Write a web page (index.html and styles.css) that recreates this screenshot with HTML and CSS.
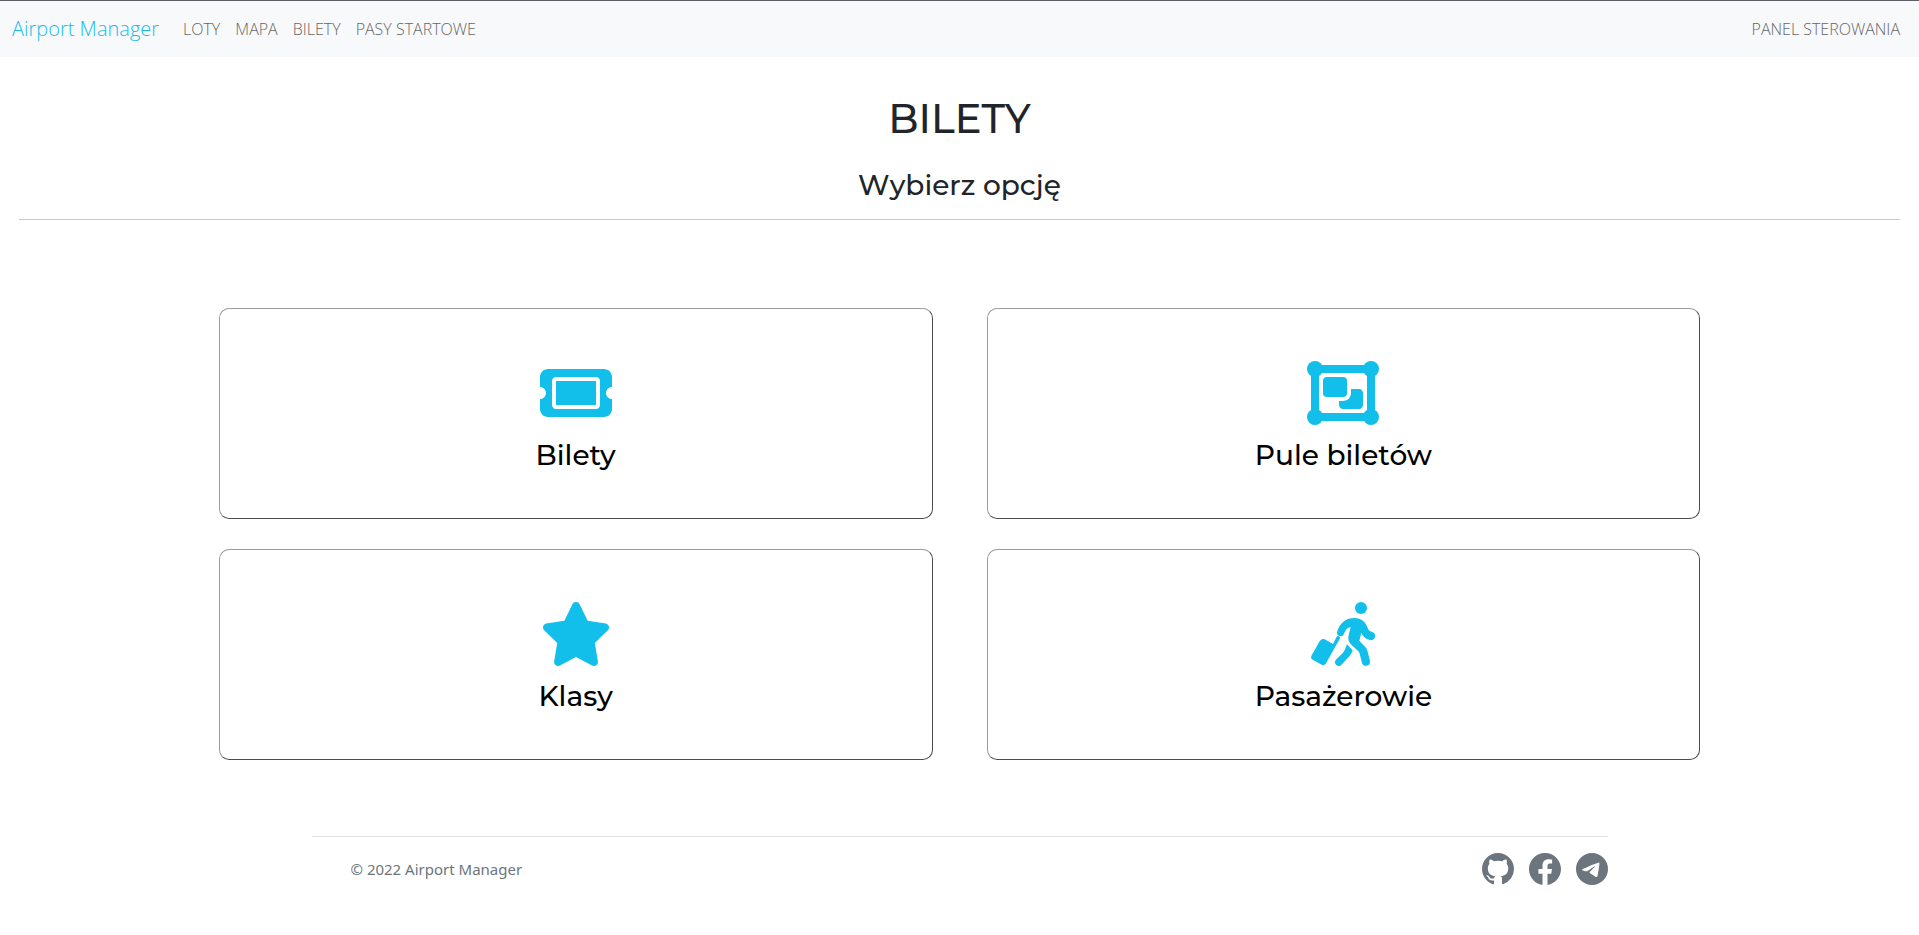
FILE: index.html
```html
<!DOCTYPE html>
<html lang="pl">
<head>
  <meta charset="utf-8">
  <meta name="viewport" content="width=device-width, initial-scale=1">
  <title>Airport Manager</title>
  <link rel="stylesheet" href="styles.css">
</head>
<body>
  <nav class="navbar">
    <a class="brand" href="#">Airport Manager</a>
    <div class="nav-links">
      <a href="#">LOTY</a>
      <a href="#">MAPA</a>
      <a href="#">BILETY</a>
      <a href="#">PASY STARTOWE</a>
    </div>
    <a class="panel-link" href="#">PANEL STEROWANIA</a>
  </nav>

  <header class="page-header">
    <h1>BILETY</h1>
    <h2>Wybierz opcję</h2>
  </header>

  <main class="options">
    <button class="option" type="button">
      <svg class="option-icon" viewBox="0 0 576 512" aria-hidden="true"><path d="M128 160H448V352H128V160zM512 64C547.3 64 576 92.65 576 128V208C549.5 208 528 229.5 528 256C528 282.5 549.5 304 576 304V384C576 419.3 547.3 448 512 448H64C28.65 448 0 419.3 0 384V304C26.51 304 48 282.5 48 256C48 229.5 26.51 208 0 208V128C0 92.65 28.65 64 64 64H512zM96 352C96 369.7 110.3 384 128 384H448C465.7 384 480 369.7 480 352V160C480 142.3 465.7 128 448 128H128C110.3 128 96 142.3 96 160V352z"/></svg>
      <span>Bilety</span>
    </button>
    <button class="option" type="button">
      <svg class="option-icon" viewBox="0 0 576 512" aria-hidden="true">
        <path fill-rule="evenodd" d="M64 32H512L544 64V448L512 480H64L32 448V64zM118 96L96 118V394L118 416H458L480 394V118L458 96z"/>
        <circle cx="64" cy="64" r="64"/><circle cx="512" cy="64" r="64"/><circle cx="64" cy="448" r="64"/><circle cx="512" cy="448" r="64"/>
        <rect x="128" y="128" width="192" height="160" rx="32"/>
        <path d="M288 320c35.300 0 64-28.700 64-64V224h64c17.700 0 32 14.300 32 32v96c0 17.700-14.300 32-32 32H288c-17.700 0-32-14.300-32-32V320z"/>
      </svg>
      <span>Pule biletów</span>
    </button>
    <button class="option" type="button">
      <svg class="option-icon" viewBox="0 0 576 512" aria-hidden="true"><path d="M381.2 150.3L524.9 171.5C536.8 173.2 546.8 181.6 550.6 193.1C554.4 204.7 551.3 217.3 542.7 225.9L438.5 328.1L463.1 474.7C465.1 486.7 460.2 498.9 450.2 506C440.3 513.1 427.2 514 416.5 508.3L288.1 439.8L159.8 508.3C149 514 135.9 513.1 126 506C116.1 498.9 111.1 486.7 113.2 474.7L137.8 328.1L33.58 225.9C24.97 217.3 21.91 204.7 25.69 193.1C29.46 181.6 39.43 173.2 51.42 171.5L195 150.3L259.4 17.97C264.7 6.995 275.8 0 288.1 0C300.4 0 311.5 6.995 316.9 17.97L381.2 150.3z"/></svg>
      <span>Klasy</span>
    </button>
    <button class="option" type="button">
      <svg class="option-icon" viewBox="246 63 192 192" aria-hidden="true">
        <circle cx="396" cy="81" r="18"/>
        <path d="M376 111C352 111 334 124 326 148C321 158 326 166 335 166C341 166 344 162 346 156C349 147 356 140 365 138L359 162C356 173 359 184 367 191L388 211C390 213 391 215 392 218L399 246C401 252 407 256 413 254C420 253 424 247 423 240L416 212C415 206 412 201 408 197L391 179L397 155L400 161C403 166 408 170 412 173L422 177C428 179 435 176 438 169C440 162 437 156 431 154L424 151C421 150 419 148 418 145L413 134C407 120 394 111 376 111Z"/>
        <path d="M354 190L371 208C369 214 366 220 362 224L339 250C334 256 326 256 321 251C316 246 317 240 322 235L342 215C345 211 347 208 348 205Z"/>
        <path d="M287 175L312 189L322 169C324 165 327 164 330 166C333 168 334 171 332 174L291 247C288 252 283 254 278 251L251 236C246 233 245 228 248 223L272 181C275 175 281 172 287 175Z"/>
      </svg>
      <span>Pasażerowie</span>
    </button>
  </main>

  <footer class="footer">
    <span class="copyright">© 2022 Airport Manager</span>
    <div class="social">
      <a href="#" aria-label="GitHub"><svg viewBox="0 0 16 16"><path d="M8 0C3.58 0 0 3.58 0 8c0 3.54 2.29 6.53 5.47 7.59.4.07.55-.17.55-.38 0-.19-.01-.82-.01-1.49-2.01.37-2.53-.49-2.69-.94-.09-.23-.48-.94-.82-1.13-.28-.15-.68-.52-.01-.53.63-.01 1.08.58 1.23.82.72 1.21 1.87.87 2.33.66.07-.52.28-.87.51-1.07-1.78-.2-3.64-.89-3.64-3.95 0-.87.31-1.59.82-2.15-.08-.2-.36-1.02.08-2.12 0 0 .67-.21 2.2.82.64-.18 1.32-.27 2-.27.68 0 1.36.09 2 .27 1.53-1.04 2.2-.82 2.2-.82.44 1.1.16 1.92.08 2.12.51.56.82 1.27.82 2.15 0 3.07-1.87 3.75-3.65 3.95.29.25.54.73.54 1.48 0 1.07-.01 1.93-.01 2.2 0 .21.15.46.55.38A8.012 8.012 0 0 0 16 8c0-4.42-3.58-8-8-8z"/></svg></a>
      <a href="#" aria-label="Facebook"><svg viewBox="0 0 16 16"><path d="M16 8.049c0-4.446-3.582-8.05-8-8.05C3.58 0-.002 3.603-.002 8.05c0 4.017 2.926 7.347 6.75 7.951v-5.625h-2.03V8.05H6.75V6.275c0-2.017 1.195-3.131 3.022-3.131.876 0 1.791.157 1.791.157v1.98h-1.009c-.993 0-1.303.621-1.303 1.258v1.51h2.218l-.354 2.326H9.25V16c3.824-.604 6.75-3.934 6.75-7.951z"/></svg></a>
      <a href="#" aria-label="Telegram"><svg viewBox="0 0 16 16"><path d="M16 8A8 8 0 1 1 0 8a8 8 0 0 1 16 0zM8.287 5.906c-.778.324-2.334.994-4.666 2.01-.378.15-.577.298-.595.442-.03.243.275.339.69.47l.175.055c.408.133.958.288 1.243.294.26.006.549-.1.868-.32 2.179-1.471 3.304-2.214 3.374-2.23.05-.012.12-.026.166.016.047.041.042.12.037.141-.03.129-1.227 1.241-1.846 1.817-.193.18-.33.307-.358.336a8.154 8.154 0 0 1-.188.186c-.38.366-.664.64.015 1.088.327.216.589.393.85.571.284.194.568.387.936.629.093.06.183.125.27.187.331.236.63.448.997.414.214-.02.435-.22.547-.82.265-1.417.786-4.486.906-5.751a1.426 1.426 0 0 0-.013-.315.337.337 0 0 0-.114-.217.526.526 0 0 0-.31-.093c-.3.005-.763.166-2.984 1.09z"/></svg></a>
    </div>
  </footer>
</body>
</html>
```
FILE: styles.css
```css
* {
  box-sizing: border-box;
}

body {
  margin: 0;
  background: #fff;
  color: #212529;
  font-family: "Segoe UI", "Open Sans", "Noto Sans", sans-serif;
  font-size: 16px;
  line-height: 24px;
}

a {
  color: inherit;
  text-decoration: none;
}

.navbar {
  display: flex;
  align-items: center;
  padding: 13px 19px 13px 12px;
  border-top: 1px solid #5f5e66;
  background: #f8f9fb;
  color: #666;
  font-size: 16px;
  font-weight: 300;
  line-height: 30px;
}

.brand {
  margin-right: 24px;
  color: #17bdea;
  font-size: 20px;
}

.nav-links {
  display: flex;
  gap: 15px;
}

.panel-link {
  margin-left: auto;
}

.page-header {
  margin: 0 1%;
  padding: 38px 0 16px;
  border-bottom: 1px solid #c8c9ca;
  font-family: Montserrat, Inter, sans-serif;
  text-align: center;
}

.page-header h1 {
  margin: 0 0 24px;
  font-size: 40px;
  font-weight: 500;
  line-height: 48px;
}

.page-header h2 {
  margin: 0;
  font-size: 28px;
  font-weight: 500;
  line-height: 36px;
}

.options {
  display: grid;
  grid-template-columns: 1fr 1fr;
  gap: 30px 54px;
  margin: 88px 11.4% 0;
}

.option {
  display: flex;
  flex-direction: column;
  align-items: center;
  gap: 12px;
  padding: 52px 16px 45px;
  border: 1px solid;
  border-color: #9c9c9c #4c4c4c #4c4c4c #9c9c9c;
  border-radius: 10px;
  background: #fff;
  color: #000;
  font-family: Montserrat, Inter, sans-serif;
  font-size: 28px;
  font-weight: 500;
  line-height: 36px;
}

.option-icon {
  height: 64px;
  fill: #12beea;
}

.footer {
  display: flex;
  align-items: center;
  justify-content: space-between;
  max-width: 1296px;
  margin: 76px auto 48px;
  padding: 16px 0 16px 39px;
  border-top: 1px solid #dee2e6;
  color: #6c757d;
}

.copyright {
  font-family: "Segoe UI", "Noto Sans", sans-serif;
  font-size: 15px;
}

.social {
  display: flex;
  gap: 15px;
}

.social svg {
  display: block;
  width: 32px;
  height: 32px;
  fill: #6c757d;
}
```
